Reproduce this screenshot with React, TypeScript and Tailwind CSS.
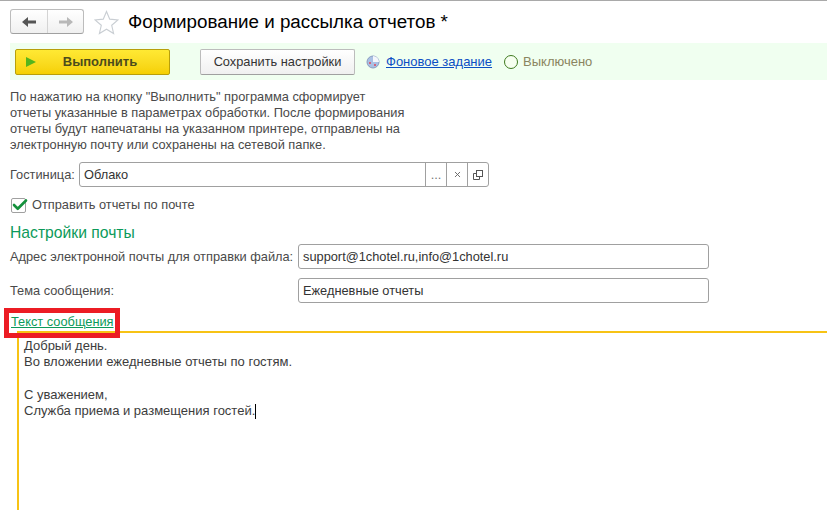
import { Check, X } from 'lucide-react';

const font = { fontFamily: '"Liberation Sans", Arial, sans-serif' };

function TextBox({ value, className }: { value: string; className: string }) {
  return (
    <div className={`h-[25px] flex items-center bg-white border border-[#a0a0a0] rounded-[3px] pl-[4px] text-[12.8px] text-[#333] ${className}`}>
      {value}
    </div>
  );
}

export default function App() {
  return (
    <div style={font} className="relative w-[827px] h-[510px] overflow-hidden bg-white border-t border-[#a9a9a9] text-[12.8px] text-[#4a4a4a]">
      {/* Title bar */}
      <div className="h-[42px] pl-[10px] pt-[8px] flex items-start">
        <div className="w-[74px] h-[25px] flex bg-gradient-to-b from-white to-[#f0f0f0] border border-[#bcbcbc] border-b-[#a0a0a0] rounded-[3px]">
          <div className="w-[37px] flex items-center justify-center border-r border-[#d4d4d4]">
            <svg viewBox="0 0 14 10" className="w-[14px] h-[10px]">
              <path d="M0 5 L6 0 V3.5 H14 V6.5 H6 V10 Z" fill="#555" />
            </svg>
          </div>
          <div className="flex-1 flex items-center justify-center">
            <svg viewBox="0 0 14 10" className="w-[14px] h-[10px]">
              <path d="M14 5 L8 0 V3.5 H0 V6.5 H8 V10 Z" fill="#b8b8b8" />
            </svg>
          </div>
        </div>
        <svg viewBox="0 0 24 24" className="ml-[10px] mt-[1px] w-[25px] h-[25px]" fill="none" stroke="#c9ced3" strokeWidth="1.1">
          <path d="M12 1.5 L15.1 8.8 L23 9.5 L17 14.7 L18.8 22.5 L12 18.4 L5.2 22.5 L7 14.7 L1 9.5 L8.9 8.8 Z" />
        </svg>
        <span className="ml-[9px] mt-[1px] text-[18.8px] leading-[24px] text-black">Формирование и рассылка отчетов *</span>
      </div>

      {/* Command bar */}
      <div className="ml-[10px] h-[37px] bg-[#f0fff0] flex items-center pl-[5px]">
        <button className="relative w-[155px] h-[26px] flex items-center justify-center pl-[15px] rounded-[2px] border border-[#b89f0a] bg-gradient-to-b from-[#ffe933] to-[#f5d000] text-[13px] font-bold text-[#4c4c1c]">
          <svg viewBox="0 0 10 10" className="absolute left-[10px] top-[7px] w-[10px] h-[10px]">
            <path d="M0 0 L10 5 L0 10 Z" fill="#55b51c" />
          </svg>
          Выполнить
        </button>
        <button className="ml-[30px] w-[155px] h-[26px] rounded-[2px] border border-[#bcbcbc] border-b-[#a0a0a0] bg-gradient-to-b from-white to-[#f0f0f0] text-[12.8px] text-[#333]">
          Сохранить настройки
        </button>
        <svg viewBox="0 0 14 14" className="ml-[11px] w-[14px] h-[14px]">
          <circle cx="7" cy="7" r="6" fill="#a9c0e4" stroke="#8a9cc0" />
          <path d="M7 1 A6 6 0 0 1 13 7 L7 7 Z" fill="#f4f6fb" />
          <circle cx="4" cy="8" r="1" fill="#e2475a" />
          <circle cx="9" cy="10" r="1" fill="#e2475a" />
        </svg>
        <a className="ml-[6px] text-[13px] text-[#0b4fc4] underline">Фоновое задание</a>
        <span className="ml-[12px] w-[14px] h-[14px] rounded-full border border-[#3f7a1f] bg-[#f6fff0]" />
        <span className="ml-[5px] text-[13px] text-[#8a8560]">Выключено</span>
      </div>

      {/* Description */}
      <p className="ml-[10px] mt-[9px] w-[420px] leading-[16px] text-[#4a4a4a]">
        По нажатию на кнопку "Выполнить" программа сформирует<br />
        отчеты указанные в параметрах обработки. После формирования<br />
        отчеты будут напечатаны на указанном принтере, отправлены на<br />
        электронную почту или сохранены на сетевой папке.
      </p>

      {/* Hotel */}
      <div className="ml-[10px] mt-[9px] flex items-center">
        <span className="w-[69px]">Гостиница:</span>
        <div className="w-[410px] h-[25px] flex bg-white border border-[#a0a0a0] rounded-[3px] text-[#333]">
          <span className="flex-1 flex items-center pl-[4px]">Облако</span>
          <span className="w-[21px] flex items-center justify-center border-l border-[#a0a0a0] text-[#777]">...</span>
          <span className="w-[21px] flex items-center justify-center border-l border-[#a0a0a0]">
            <X className="w-[9px] h-[9px] text-[#666]" strokeWidth={2.5} />
          </span>
          <span className="w-[21px] flex items-center justify-center border-l border-[#a0a0a0]">
            <svg viewBox="0 0 12 12" className="w-[12px] h-[12px]" fill="none" stroke="#555" strokeWidth="1">
              <rect x="4.5" y="1.5" width="6" height="6" />
              <path d="M4.5 4.5 H1.5 V10.5 H7.5 V7.5" />
            </svg>
          </span>
        </div>
      </div>

      {/* Send checkbox */}
      <div className="ml-[11px] mt-[10px] flex items-center h-[16px]">
        <span className="relative w-[15px] h-[15px] border border-[#a0a0a0] rounded-[2px] bg-white">
          <Check className="absolute -left-[1px] -top-[3px] w-[18px] h-[18px] text-[#14913c]" strokeWidth={3.5} />
        </span>
        <span className="ml-[6px]">Отправить отчеты по почте</span>
      </div>

      <div className="ml-[10px] mt-[11px] text-[15.7px] leading-[18px] text-[#0b9a5a]">Настройки почты</div>

      {/* Mail fields */}
      <div className="ml-[10px] mt-[2px] flex items-center">
        <span className="w-[288px]">Адрес электронной почты для отправки файла:</span>
        <TextBox value="support@1chotel.ru,info@1chotel.ru" className="w-[411px]" />
      </div>
      <div className="ml-[10px] mt-[9px] flex items-center">
        <span className="w-[288px]">Тема сообщения:</span>
        <TextBox value="Ежедневные отчеты" className="w-[411px]" />
      </div>

      <a className="block ml-[11px] mt-[11px] leading-[16px] text-[#0b9a5a] underline">Текст сообщения</a>

      {/* Message editor */}
      <div className="ml-[17px] mt-[1px] h-[180px] border-t-2 border-l-2 border-[#f7c315] pl-[5px] pt-[5px] text-[13px] leading-[16.3px] text-[#3c3c3c]">
        Добрый день.<br />
        Во вложении ежедневные отчеты по гостям.<br />
        <br />
        С уважением,<br />
        Служба приема и размещения гостей.<span className="inline-block w-px h-[15px] bg-black align-middle" />
      </div>

      {/* Red highlight around the link */}
      <div className="absolute left-[4px] top-[307px] w-[116px] h-[30px] border-[5px] border-[#ec1c24]" />
    </div>
  );
}
